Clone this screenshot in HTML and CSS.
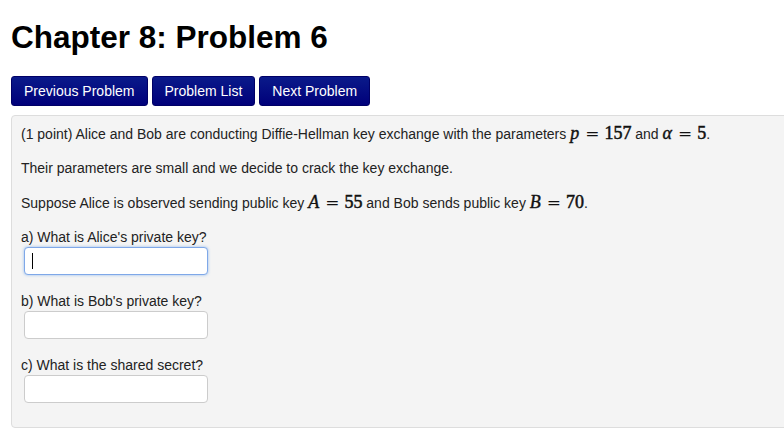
FILE: index.html
```html
<!DOCTYPE html>
<html>
<head>
<meta charset="utf-8">
<link rel="stylesheet" href="styles.css">
</head>
<body>
<div class="page">
  <h1 class="title">Chapter 8: Problem 6</h1>
  <div class="nav">
    <button class="btn">Previous Problem</button>
    <button class="btn">Problem List</button>
    <button class="btn">Next Problem</button>
  </div>
  <div class="problem">
    <p class="para">(1 point) Alice and Bob are conducting Diffie-Hellman key exchange with the parameters <span class="math"><i>p</i><span class="eq">=</span><b>157</b></span> and <span class="math"><i>α</i><span class="eq">=</span><b>5</b></span>.</p>
    <p class="para">Their parameters are small and we decide to crack the key exchange.</p>
    <p class="para">Suppose Alice is observed sending public key <span class="math"><i>A</i><span class="eq">=</span><b>55</b></span> and Bob sends public key <span class="math"><i>B</i><span class="eq">=</span><b>70</b></span>.</p>
    <div class="question">
      <div class="label">a) What is Alice's private key?</div>
      <div class="field focused"><span class="caret"></span></div>
    </div>
    <div class="question">
      <div class="label">b) What is Bob's private key?</div>
      <div class="field"></div>
    </div>
    <div class="question">
      <div class="label">c) What is the shared secret?</div>
      <div class="field"></div>
    </div>
  </div>
</div>
</body>
</html>
```
FILE: styles.css
```css
html, body {
  margin: 0;
  padding: 0;
  background: #ffffff;
  overflow: hidden;
}
body {
  font-family: "Liberation Sans", Arial, sans-serif;
  color: #222;
}
.page {
  padding: 0 0 0 11px;
  width: 820px;
}
.title {
  margin: 0;
  padding-top: 19px;
  font-size: 31.5px;
  line-height: 36px;
  font-weight: bold;
  color: #000;
}
.nav {
  display: flex;
  gap: 4px;
  margin-top: 21px;
}
.btn {
  font-family: "Liberation Sans", Arial, sans-serif;
  font-size: 14px;
  color: #fff;
  height: 30px;
  padding: 0 12px;
  border: 1px solid #000066;
  border-radius: 3px;
  background: linear-gradient(#0a1a8a, #00007a);
  cursor: pointer;
}
.problem {
  margin-top: 9px;
  background: #f4f4f4;
  border: 1px solid #dddddd;
  border-radius: 4px;
  padding: 7px 9px 24px;
  font-size: 14px;
  color: #222;
}
.para {
  margin: 0 0 14px;
  line-height: 20px;
}
.math {
  font-family: "Liberation Serif", "DejaVu Serif", serif;
  font-size: 18px;
  color: #111;
}
.math i {
  font-style: italic;
  font-weight: normal;
  -webkit-text-stroke: 0.4px #111;
  margin-right: 1px;
}
.math b {
  font-weight: normal;
  -webkit-text-stroke: 0.5px #111;
}
.eq {
  font-weight: normal;
  margin: 0 5px;
  font-family: "DejaVu Serif", serif;
  font-size: 17px;
}
.question {
  margin-bottom: 16px;
}
.question:last-child {
  margin-bottom: 0;
}
.label {
  line-height: 20px;
  margin-bottom: 0;
}
.field {
  margin-left: 3px;
  width: 182px;
  height: 26px;
  background: #fff;
  border: 1px solid #cccccc;
  border-radius: 4px;
  display: flex;
  align-items: center;
}
.field.focused {
  border-color: #7fa8e8;
  box-shadow: 0 0 3px rgba(82, 150, 236, 0.6);
}
.caret {
  display: block;
  width: 1px;
  height: 16px;
  background: #000;
  margin-left: 7px;
}
```
